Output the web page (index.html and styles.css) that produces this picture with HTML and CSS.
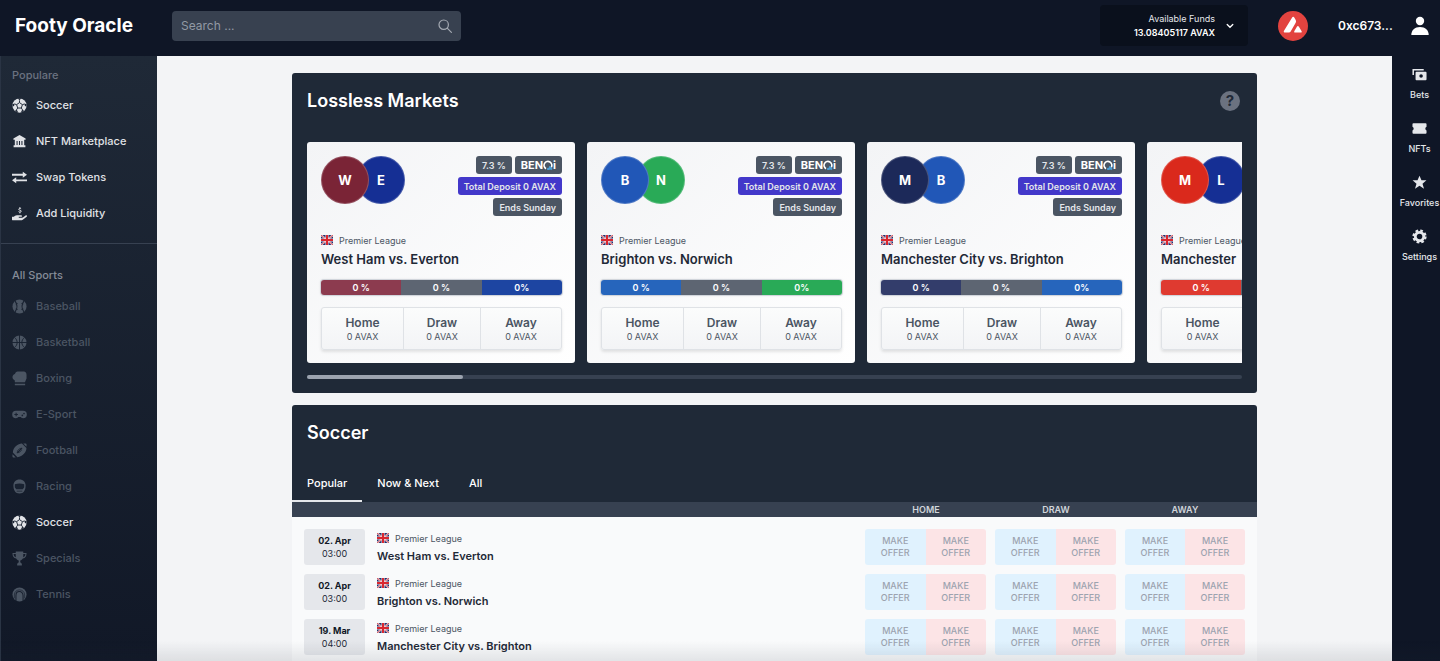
FILE: index.html
```html
<!DOCTYPE html>
<html lang="en">
<head>
<meta charset="utf-8">
<meta name="viewport" content="width=device-width, initial-scale=1">
<title>Footy Oracle</title>
<link rel="stylesheet" href="styles.css">
</head>
<body>
<svg class="sprite" aria-hidden="true">
  <symbol id="flag" viewBox="0 0 12 10"><path fill="#1f2f6e" d="M0 0h12v10H0z"/><path stroke="#f3dfe3" stroke-width="1.800" d="M0 0l12 10M12 0L0 10"/><path stroke="#d8434c" stroke-width=".9" d="M0 0l12 10M12 0L0 10"/><path stroke="#f6e9ec" stroke-width="3" d="M6 0v10M0 5h12"/><path stroke="#d9262f" stroke-width="2" d="M6 0v10M0 5h12"/></symbol>
  <symbol id="soccer" viewBox="0 0 16 16"><circle cx="8" cy="8" r="7.600" fill="currentColor"/><g fill="none" stroke="#1b2433" stroke-width="1"><path d="M8 4.900l3.100 2.200-1.200 3.600H6.100L4.900 7.100z"/><path d="M8 4.900V2.500M11.100 7.100l2.300-.8M9.900 10.700l1.400 2M6.100 10.700l-1.400 2M4.900 7.100l-2.300-.8"/></g><g fill="#1b2433"><path d="M6.200.6L8 2.500 9.800.6 9 .2H7zM15.500 6.500l-2.300-.3.600 2.400 1.700.5zM12.800 13.700l-1.600-1.200-1.400 1.700.5 1.300zM3.200 13.700l1.600-1.200 1.400 1.700-.5 1.300zM.5 6.500l2.300-.3-.6 2.400-1.700.5z"/></g></symbol>
  <symbol id="bank" viewBox="0 0 16 16"><path fill="currentColor" d="M8 1l6.500 3.800V6H13v6h1.300v2H1.700v-2H3V6H1.500V4.800z"/><path stroke="#1f2937" stroke-width="1.100" d="M5.400 7.400v4.400M8 7.400v4.400M10.600 7.400v4.400"/></symbol>
  <symbol id="swap" viewBox="0 0 16 16"><path fill="currentColor" d="M0 4h11.500V1.800L16 5l-4.500 3.200V6H0zM16 12H4.500v2.200L0 11l4.500-3.200V10H16z"/></symbol>
  <symbol id="liquidity" viewBox="0 0 576 512"><path fill="currentColor" d="M565.300 328.100c-11.800-10.700-30.200-10-42.600 0L430.300 402c-11.300 9.100-25.400 14-40 14H272c-8.800 0-16-7.200-16-16s7.200-16 16-16h78.300c15.900 0 30.700-10.900 33.300-26.600 3.300-20-12.100-37.400-31.600-37.400H192c-27 0-53.100 9.300-74.100 26.300L71.400 384H16c-8.800 0-16 7.200-16 16v96c0 8.800 7.200 16 16 16h356.800c14.500 0 28.600-4.900 40-14L564 377c15.200-12.100 16.400-35.300 1.300-48.900z"/><path fill="none" stroke="currentColor" stroke-width="38" d="M350 75c-25-20-92-20-92 20 0 50 98 20 98 72 0 42-75 42-104 16M304 10v45M304 205v45"/></symbol>
  <symbol id="baseball" viewBox="0 0 16 16"><circle cx="8" cy="8" r="7.500" fill="currentColor"/><path fill="none" stroke="#192231" stroke-width="1.200" d="M3.200 2c2.600 3.600 2.600 8.400 0 12M12.800 2c-2.600 3.600-2.600 8.400 0 12"/><path stroke="#192231" stroke-width=".9" d="M4 5.500l2-.7M4 10.500l2 .7M12 5.500l-2-.7M12 10.500l-2 .7"/></symbol>
  <symbol id="basketball" viewBox="0 0 16 16"><circle cx="8" cy="8" r="7.500" fill="currentColor"/><path fill="none" stroke="#192231" stroke-width="1" d="M8 0v16M0 8h16M2.500 2.500c4 2.900 4 8.100 0 11M13.500 2.500c-4 2.900-4 8.100 0 11"/></symbol>
  <symbol id="boxing" viewBox="0 0 16 16"><path fill="currentColor" d="M6 .5h6.500C14.500.5 15.500 2 15.500 4v4l-1.700 4H3V10C1.500 9.500.5 8.300.5 6.500S2 3.300 3.200 3.200C3.500 1.500 4.600.5 6 .5zM3 13.500h11v1.600H3z"/></symbol>
  <symbol id="gamepad" viewBox="0 0 16 16"><path fill="currentColor" d="M4.200 4h7.600a4 4 0 010 8c-1.300 0-1.900-.6-2.500-1.300H6.700C6.100 11.400 5.500 12 4.200 12a4 4 0 010-8z"/><path stroke="#192231" stroke-width="1.100" d="M2.500 8h3.800M4.400 6.100v3.800"/><g fill="#192231"><circle cx="11" cy="9" r=".9"/><circle cx="12.800" cy="6.900" r=".9"/></g></symbol>
  <symbol id="football" viewBox="0 0 16 16"><path fill="currentColor" d="M10.600.6C6.600.5 1.300 4.500.9 10.200l4.900 5C11.500 14.600 15.500 9.400 15.400 5.400zM12 .5l3.500 3.500V1.500a1 1 0 00-1-1zM.5 12l3.500 3.500H1.500a1 1 0 01-1-1z"/><path stroke="#192231" stroke-width="1.100" d="M5.200 10.800l5.600-5.600M5.500 8.200l2.300 2.300M8.200 5.500l2.300 2.300M6.900 6.900l2.200 2.200"/></symbol>
  <symbol id="racing" viewBox="0 0 16 16"><path fill="currentColor" d="M8 .5c4 0 6.500 2.700 6.500 6.500 0 5-2 8.500-6.500 8.500S1.500 12 1.500 7C1.500 3.200 4 .5 8 .5z"/><path fill="#192231" d="M3 5.500c3-.8 7-.8 10 0v3.300L11.500 11h-7L3 8.800zM5 12.500h6v.8H5z"/></symbol>
  <symbol id="trophy" viewBox="0 0 16 16"><path fill="currentColor" fill-rule="evenodd" d="M4 .5h8V2h3.500c0 3.500-1 5.500-4 6-.6 1-1.500 1.800-2.700 2.100V12l1.700 1.500v2h-5v-2L7.200 12v-1.900C6 9.800 5.100 9 4.500 8c-3-.5-4-2.500-4-6H4zM1.700 3.200C1.900 5 2.500 6 4 6.600V3.200zM14.300 3.200H12v3.400c1.500-.6 2.100-1.600 2.300-3.400z"/></symbol>
  <symbol id="tennis" viewBox="0 0 16 16"><circle cx="8" cy="8" r="7.500" fill="currentColor"/><path fill="none" stroke="#171f2e" stroke-width="1.100" d="M4.200 15V9c0-5.500 7.600-5.500 7.600 0v6"/><path fill="none" stroke="#171f2e" stroke-width=".7" d="M2.500 12V8.500C2.500 1.300 13.500 1.300 13.500 8.500V12"/></symbol>
  <symbol id="benqi" viewBox="0 0 10 11"><path fill="none" stroke="#fff" stroke-width="1.600" d="M3 8.700A3.900 3.900 0 118.300 7.300"/><path fill="none" stroke="#4d9fd6" stroke-width="2" d="M4.200 9h2.600M6.200 6.500l2.600 3.200"/></symbol>
</svg>

<div class="app">
  <header class="topbar">
    <a class="brand" href="#">Footy Oracle</a>
    <form class="search" role="search">
      <input class="search-input" type="search" placeholder="Search ..." aria-label="Search">
      <button class="search-button" type="button" aria-label="Submit search"><svg viewBox="0 0 14 14"><circle cx="5.700" cy="5.700" r="4.700"/><path d="M9.200 9.200l4.200 4.200"/></svg></button>
    </form>
    <div class="account">
      <button class="funds" type="button">
        <span class="funds-text"><span>Available Funds</span><span class="funds-value">13.08405117 AVAX</span></span>
        <svg class="chevron" viewBox="0 0 8 8"><path d="M1.200 2.500L4 5.300l2.800-2.800"/></svg>
      </button>
      <svg class="avax" viewBox="0 0 30 30" role="img" aria-label="Avalanche"><circle cx="15" cy="15" r="15" fill="#e2433f"/><path fill="#fff" d="M14 6.700c.7-1.200 1.700-1.200 2.400 0l1.300 2.400c.5.900.5 1.700 0 2.600l-4.900 8.500c-.6 1-1.300 1.400-2.400 1.400H7.100c-1.300 0-1.700-.8-1.100-1.900zM18.900 15.800c.6-1 1.400-1 2 0l2.600 4.200c.6 1 .2 1.600-.9 1.600h-5.300c-1.100 0-1.500-.7-.9-1.700z"/></svg>
      <span class="address">0xc673...</span>
      <button class="profile" type="button" aria-label="Profile"><svg viewBox="0 0 18 20"><circle cx="9" cy="5" r="4.200"/><path d="M.3 19c0-5 3.500-8 8.700-8s8.700 3 8.700 8z"/></svg></button>
    </div>
  </header>

  <div class="body">
    <nav class="sidebar" aria-label="Sports">
      <section class="nav-group nav-group-top">
        <h2 class="nav-title">Populare</h2>
        <ul class="nav-list">
          <li><a class="nav-link" href="#"><svg><use href="#soccer"/></svg>Soccer</a></li>
          <li><a class="nav-link" href="#"><svg><use href="#bank"/></svg>NFT Marketplace</a></li>
          <li><a class="nav-link" href="#"><svg><use href="#swap"/></svg>Swap Tokens</a></li>
          <li><a class="nav-link" href="#"><svg><use href="#liquidity"/></svg>Add Liquidity</a></li>
        </ul>
      </section>
      <section class="nav-group nav-group-sports">
        <h2 class="nav-title">All Sports</h2>
        <ul class="nav-list">
          <li><a class="nav-link muted" href="#"><svg><use href="#baseball"/></svg>Baseball</a></li>
          <li><a class="nav-link muted" href="#"><svg><use href="#basketball"/></svg>Basketball</a></li>
          <li><a class="nav-link muted" href="#"><svg><use href="#boxing"/></svg>Boxing</a></li>
          <li><a class="nav-link muted" href="#"><svg><use href="#gamepad"/></svg>E-Sport</a></li>
          <li><a class="nav-link muted" href="#"><svg><use href="#football"/></svg>Football</a></li>
          <li><a class="nav-link muted" href="#"><svg><use href="#racing"/></svg>Racing</a></li>
          <li><a class="nav-link" href="#"><svg><use href="#soccer"/></svg>Soccer</a></li>
          <li><a class="nav-link muted" href="#"><svg><use href="#trophy"/></svg>Specials</a></li>
          <li><a class="nav-link muted" href="#"><svg><use href="#tennis"/></svg>Tennis</a></li>
        </ul>
      </section>
    </nav>

    <main class="main">
      <div class="content">
        <section class="panel markets">
          <div class="panel-head">
            <h1 class="panel-title">Lossless Markets</h1>
            <button class="help" type="button" aria-label="About lossless markets">?</button>
          </div>
          <div class="strip">
            <article class="card">
              <div class="card-top">
                <div class="teams"><span class="team west-ham">W</span><span class="team team-away everton">E</span></div>
                <div class="badges"><div class="badge-row"><span class="badge">7.3 %</span><span class="badge benqi">BEN<svg><use href="#benqi"/></svg>i</span></div><span class="badge deposit">Total Deposit 0 AVAX</span><span class="badge">Ends Sunday</span></div>
              </div>
              <p class="league"><svg class="flag"><use href="#flag"/></svg>Premier League</p>
              <h2 class="card-title">West Ham vs. Everton</h2>
              <div class="odds"><span class="west-ham">0 %</span><span class="draw">0 %</span><span class="everton">0%</span></div>
              <div class="picks"><button class="pick" type="button"><b>Home</b>0 AVAX</button><button class="pick" type="button"><b>Draw</b>0 AVAX</button><button class="pick" type="button"><b>Away</b>0 AVAX</button></div>
            </article>
            <article class="card">
              <div class="card-top">
                <div class="teams"><span class="team brighton">B</span><span class="team team-away norwich">N</span></div>
                <div class="badges"><div class="badge-row"><span class="badge">7.3 %</span><span class="badge benqi">BEN<svg><use href="#benqi"/></svg>i</span></div><span class="badge deposit">Total Deposit 0 AVAX</span><span class="badge">Ends Sunday</span></div>
              </div>
              <p class="league"><svg class="flag"><use href="#flag"/></svg>Premier League</p>
              <h2 class="card-title">Brighton vs. Norwich</h2>
              <div class="odds"><span class="brighton">0 %</span><span class="draw">0 %</span><span class="norwich">0%</span></div>
              <div class="picks"><button class="pick" type="button"><b>Home</b>0 AVAX</button><button class="pick" type="button"><b>Draw</b>0 AVAX</button><button class="pick" type="button"><b>Away</b>0 AVAX</button></div>
            </article>
            <article class="card">
              <div class="card-top">
                <div class="teams"><span class="team man-city">M</span><span class="team team-away brighton">B</span></div>
                <div class="badges"><div class="badge-row"><span class="badge">7.3 %</span><span class="badge benqi">BEN<svg><use href="#benqi"/></svg>i</span></div><span class="badge deposit">Total Deposit 0 AVAX</span><span class="badge">Ends Sunday</span></div>
              </div>
              <p class="league"><svg class="flag"><use href="#flag"/></svg>Premier League</p>
              <h2 class="card-title">Manchester City vs. Brighton</h2>
              <div class="odds"><span class="man-city">0 %</span><span class="draw">0 %</span><span class="brighton">0%</span></div>
              <div class="picks"><button class="pick" type="button"><b>Home</b>0 AVAX</button><button class="pick" type="button"><b>Draw</b>0 AVAX</button><button class="pick" type="button"><b>Away</b>0 AVAX</button></div>
            </article>
            <article class="card">
              <div class="card-top">
                <div class="teams"><span class="team man-united">M</span><span class="team team-away everton">L</span></div>
              </div>
              <p class="league"><svg class="flag"><use href="#flag"/></svg>Premier League</p>
              <h2 class="card-title">Manchester</h2>
              <div class="odds"><span class="man-united">0 %</span><span class="draw"></span><span class="everton"></span></div>
              <div class="picks"><button class="pick" type="button"><b>Home</b>0 AVAX</button></div>
            </article>
          </div>
          <div class="scroll-track"><div class="scroll-thumb"></div></div>
        </section>

        <section class="panel soccer">
          <div class="panel-head"><h1 class="panel-title">Soccer</h1></div>
          <div class="tabs" role="tablist">
            <button class="tab active" type="button" role="tab" aria-selected="true">Popular</button>
            <button class="tab" type="button" role="tab" aria-selected="false">Now &amp; Next</button>
            <button class="tab" type="button" role="tab" aria-selected="false">All</button>
          </div>
          <table class="fixtures">
            <thead><tr><th class="col-time"></th><th></th><th class="col-offer">HOME</th><th class="col-offer">DRAW</th><th class="col-offer-last">AWAY</th></tr></thead>
            <tbody>
              <tr>
                <td class="time"><div class="date"><b>02. Apr</b>03:00</div></td>
                <td class="match"><p class="league"><svg class="flag"><use href="#flag"/></svg>Premier League</p><a class="match-name" href="#">West Ham vs. Everton</a></td>
                <td><div class="offers"><button class="back" type="button">MAKE OFFER</button><button class="lay" type="button">MAKE OFFER</button></div></td>
                <td><div class="offers"><button class="back" type="button">MAKE OFFER</button><button class="lay" type="button">MAKE OFFER</button></div></td>
                <td><div class="offers"><button class="back" type="button">MAKE OFFER</button><button class="lay" type="button">MAKE OFFER</button></div></td>
              </tr>
              <tr>
                <td class="time"><div class="date"><b>02. Apr</b>03:00</div></td>
                <td class="match"><p class="league"><svg class="flag"><use href="#flag"/></svg>Premier League</p><a class="match-name" href="#">Brighton vs. Norwich</a></td>
                <td><div class="offers"><button class="back" type="button">MAKE OFFER</button><button class="lay" type="button">MAKE OFFER</button></div></td>
                <td><div class="offers"><button class="back" type="button">MAKE OFFER</button><button class="lay" type="button">MAKE OFFER</button></div></td>
                <td><div class="offers"><button class="back" type="button">MAKE OFFER</button><button class="lay" type="button">MAKE OFFER</button></div></td>
              </tr>
              <tr>
                <td class="time"><div class="date"><b>19. Mar</b>04:00</div></td>
                <td class="match"><p class="league"><svg class="flag"><use href="#flag"/></svg>Premier League</p><a class="match-name" href="#">Manchester City vs. Brighton</a></td>
                <td><div class="offers"><button class="back" type="button">MAKE OFFER</button><button class="lay" type="button">MAKE OFFER</button></div></td>
                <td><div class="offers"><button class="back" type="button">MAKE OFFER</button><button class="lay" type="button">MAKE OFFER</button></div></td>
                <td><div class="offers"><button class="back" type="button">MAKE OFFER</button><button class="lay" type="button">MAKE OFFER</button></div></td>
              </tr>
            </tbody>
          </table>
        </section>
      </div>
    </main>

    <nav class="rail" aria-label="Account">
      <a class="rail-link" href="#"><svg viewBox="0 0 16 16"><path fill="none" stroke="currentColor" stroke-width="1.600" d="M1.300 8.500V3h11.200"/><path fill="currentColor" fill-rule="evenodd" d="M4.800 5h9.700a1 1 0 011 1v7a1 1 0 01-1 1H4.800a1 1 0 01-1-1V6a1 1 0 011-1zm4.900 2.600a1.900 1.900 0 100 3.800 1.900 1.900 0 000-3.800z"/></svg>Bets</a>
      <a class="rail-link" href="#"><svg viewBox="0 0 16 16"><path fill="currentColor" d="M1.500 2.500h13a1 1 0 011 1V6a2.200 2.200 0 000 4v2.500a1 1 0 01-1 1h-13a1 1 0 01-1-1V10a2.200 2.200 0 000-4V3.500a1 1 0 011-1z"/></svg>NFTs</a>
      <a class="rail-link" href="#"><svg viewBox="0 0 16 16"><path fill="currentColor" d="M8 .7l2.100 5h5.300l-4.200 3.500 1.600 5.500L8 11.500l-4.800 3.200 1.600-5.500L.6 5.700h5.300z"/></svg>Favorites</a>
      <a class="rail-link" href="#"><svg viewBox="0 0 16 16"><circle cx="8" cy="8" r="4.500" fill="none" stroke="currentColor" stroke-width="3"/><circle cx="8" cy="8" r="6.300" fill="none" stroke="currentColor" stroke-width="2.600" stroke-dasharray="2.800 2.148"/></svg>Settings</a>
    </nav>
  </div>
  <div class="fade"></div>
</div>
</body>
</html>
```
FILE: styles.css
```css
* { box-sizing: border-box; }
body, h1, h2, p, ul { margin: 0; padding: 0; }
body { font-family: Inter, "Liberation Sans", sans-serif; font-size: 11px; background: #f3f4f6; color: #1f2937; }
ul { list-style: none; }
a { color: inherit; text-decoration: none; }
button { margin: 0; padding: 0; border: 0; background: none; color: inherit; font: inherit; cursor: pointer; }
.sprite { position: absolute; width: 0; height: 0; }

.app { display: flex; flex-direction: column; height: 100vh; overflow: hidden; }
.body { display: flex; flex: 1; min-height: 0; }

/* Top bar */
.topbar { display: flex; align-items: center; height: 56px; padding: 0 11px 5px 15px; background: #0f1626; color: #fff; }
.brand { width: 157px; font-size: 19px; font-weight: 700; }
.search { display: flex; align-items: center; width: 289px; height: 30px; padding: 0 9px; border-radius: 4px; background: #384150; }
.search-input { flex: 1; min-width: 0; padding: 0; border: 0; outline: 0; background: none; color: #fff; font: 12px Inter, sans-serif; }
.search-input::placeholder { color: #9299a4; opacity: 1; }
.search-button { width: 14px; height: 14px; }
.search-button svg { display: block; fill: none; stroke: #a4a9b2; stroke-width: 1.2; stroke-linecap: round; }
.account { display: flex; align-items: center; margin-left: auto; }
.funds { display: flex; align-items: center; justify-content: flex-end; gap: 11px; width: 148px; height: 41px; padding-right: 14px; border-radius: 4px; background: #0a101c; }
.funds-text { display: flex; flex-direction: column; align-items: flex-end; font-size: 9px; line-height: 14px; color: #e5e7eb; }
.funds-value { font-weight: 600; color: #fff; }
.chevron { width: 8px; height: 8px; fill: none; stroke: #fff; stroke-width: 1.3; stroke-linecap: round; }
.avax { width: 30px; height: 30px; margin: 0 30px; }
.address { width: 54px; font-size: 12px; font-weight: 600; white-space: nowrap; }
.profile { width: 18px; height: 20px; margin-left: 19px; }
.profile svg { display: block; fill: #fff; }

/* Left navigation */
.sidebar { flex: none; width: 157px; border-left: 1px solid #2a3444; background: linear-gradient(#1f2937, #111827); }
.nav-group { padding: 10px 11px 12px; }
.nav-group-top { border-bottom: 1px solid #374151; }
.nav-group-sports { padding-top: 22px; }
.nav-title { margin-bottom: 3px; font-size: 11px; line-height: 18px; font-weight: 500; color: #6b7280; }
.nav-link { display: flex; align-items: center; gap: 9px; height: 36px; font-weight: 500; color: #e0e2e6; white-space: nowrap; }
.nav-group-sports .nav-title { margin-bottom: 4px; color: #858c98; }
.nav-link svg { width: 15px; height: 15px; }
.nav-link.muted { color: #4b5563; }

/* Right navigation */
.rail { flex: none; display: flex; flex-direction: column; gap: 18px; width: 48px; padding: 11px 0 0 7px; background: #0f1626; }
.rail-link { display: flex; flex-direction: column; align-items: center; gap: 7px; height: 36px; font-size: 9px; line-height: 12px; font-weight: 500; color: #e5e7eb; }
.rail-link svg { flex: none; width: 15px; height: 15px; }

/* Panels */
.main { flex: 1; min-width: 0; overflow-y: auto; scrollbar-width: none; padding: 17px; }
.content { display: flex; flex-direction: column; gap: 12px; max-width: 965px; margin: 0 auto; }
.panel { border-radius: 3px; background: #1f2937; color: #fff; overflow: hidden; }
.panel-head { display: flex; align-items: center; justify-content: space-between; height: 55px; }
.panel-title { font-size: 18px; line-height: 24px; font-weight: 600; }
.markets { padding: 0 15px 14px; }
.help { width: 20px; height: 20px; margin-right: 2px; border-radius: 50%; background: #6b7280; color: #1f2937; font-size: 15px; line-height: 20px; font-weight: 700; text-align: center; }
.strip { display: flex; gap: 12px; margin-top: 14px; overflow-x: auto; scrollbar-width: none; }
.scroll-track { height: 4px; margin-top: 12px; border-radius: 2px; background: #374151; }
.scroll-thumb { width: 156px; height: 4px; border-radius: 2px; background: #9ca3af; }

/* Market card */
.card { flex: none; width: 268px; height: 221px; padding: 14px 13px 14px 14px; border-radius: 3px; background: linear-gradient(135deg, #f3f4f6, #fff); color: #1f2937; }
.card-top { display: flex; justify-content: space-between; height: 78px; }
.teams { display: flex; }
.team { display: grid; place-items: center; width: 48px; height: 48px; border: 1px solid rgba(255, 255, 255, .2); border-radius: 50%; color: #fff; font-size: 13px; font-weight: 700; z-index: 1; }
.team-away { margin-left: -12px; z-index: 0; }
.west-ham { background-color: #7a2436; }
.everton { background-color: #152f94; }
.brighton { background-color: #2157b7; }
.norwich { background-color: #29aa57; }
.man-city { background-color: #1c2959; }
.man-united { background-color: #da291c; }
.draw { background-color: #5d6572; }
.badges { display: flex; flex-direction: column; align-items: flex-end; gap: 3px; }
.badge-row { display: flex; gap: 3px; }
.badge { display: flex; align-items: center; height: 18px; padding: 0 6px; border-radius: 3px; background: #4b5563; color: #e5e7eb; font-size: 9px; font-weight: 600; white-space: nowrap; }
.badge.deposit { background: #4338ca; }
.badge.benqi { color: #fff; font-size: 11px; font-weight: 700; }
.benqi svg { width: 10px; height: 11px; }
.league { display: flex; align-items: center; gap: 6px; height: 12px; font-size: 9px; color: #4b5563; }
.flag { flex: none; width: 12px; height: 10px; }
.card-title { margin-top: 4px; font-size: 13px; line-height: 18px; font-weight: 600; white-space: nowrap; }
.odds { display: grid; grid-template-columns: 1fr 1fr 1fr; height: 15px; margin-top: 12px; border-radius: 3px; overflow: hidden; box-shadow: 0 0 0 1px #d1d5db, 0 0 3px #d1d5db; color: #fff; font-size: 9px; line-height: 15px; font-weight: 600; text-align: center; }
.odds .west-ham { background-color: #8c3b4f; }
.odds .everton { background-color: #1d45a2; }
.odds .brighton { background-color: #2665bc; }
.odds .man-city { background-color: #333d6b; }
.odds .man-united { background-color: #df3a30; }
.picks { display: grid; grid-template-columns: 81px 1fr 81px; height: 43px; margin-top: 12px; border: 1px solid #dfe2e6; border-radius: 3px; box-shadow: 0 2px 3px rgba(0, 0, 0, .1); background: linear-gradient(#fbfcfc, #f3f4f6); }
.pick { font-size: 9px; line-height: 12px; color: #4b5563; }
.pick + .pick { border-left: 1px solid #dfe2e6; }
.pick b { display: block; font-size: 12px; line-height: 16px; font-weight: 600; }

/* Fixtures */
.tabs { display: flex; height: 42px; }
.tab { padding: 5px 15px 0; border-bottom: 2px solid transparent; font-size: 11px; font-weight: 500; }
.tab.active { border-bottom-color: #e5e7eb; }
.soccer .panel-head { padding: 0 15px; }
.fixtures { width: 100%; table-layout: fixed; border-collapse: collapse; background: #f9fafb; color: #1f2937; }
.fixtures th { height: 15px; padding: 0 8px 0 0; background: #374151; color: #d1d5db; font-size: 9px; line-height: 15px; font-weight: 600; }
.fixtures .col-time { width: 73px; }
.fixtures .col-offer { width: 130px; }
.fixtures .col-offer-last { width: 132px; padding-right: 12px; }
.fixtures td { padding: 0 9px 9px 0; vertical-align: top; }
.fixtures tr:first-child td { padding-top: 12px; }
.fixtures td:last-child { padding-right: 12px; }
.fixtures .time { padding: 0 0 9px 12px; }
.fixtures .match { padding-left: 12px; }
.date { height: 36px; padding-top: 5px; border-radius: 3px; background: #e5e7eb; font-size: 9px; line-height: 13px; text-align: center; }
.date b { display: block; font-weight: 700; color: #111827; }
.match .league { margin-top: 3px; }
.match-name { display: block; margin-top: 4px; font-size: 11px; line-height: 16px; font-weight: 600; }
.offers { display: grid; grid-template-columns: 1fr 1fr; height: 36px; border-radius: 3px; overflow: hidden; }
.back, .lay { padding: 0 12px; color: #9ca3af; font-size: 9px; line-height: 12px; font-weight: 500; }
.back { background: #e0f2fe; }
.lay { background: #fce4e6; }

.fade { position: fixed; right: 0; bottom: 0; left: 0; height: 20px; background: linear-gradient(rgba(31, 41, 55, 0), rgba(31, 41, 55, .1)); pointer-events: none; }
```
